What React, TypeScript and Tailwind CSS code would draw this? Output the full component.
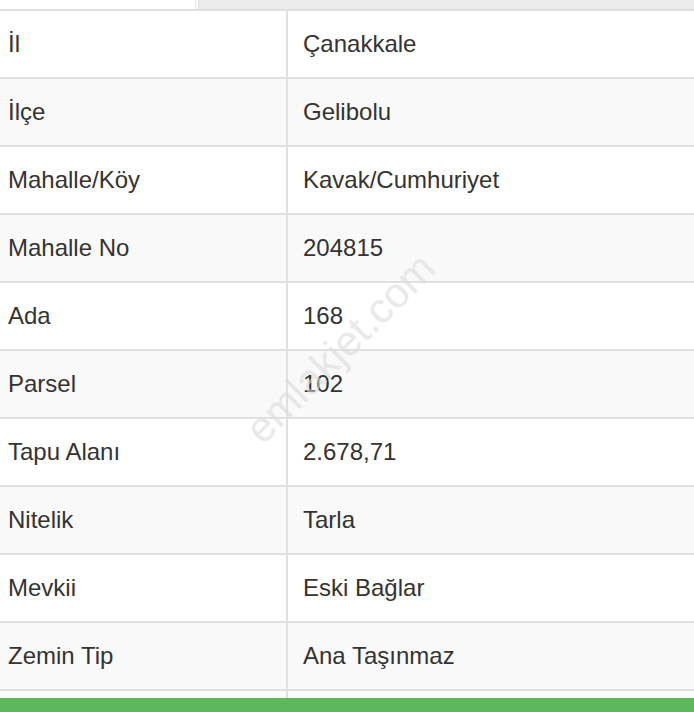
const rows: [string, string][] = [
  ['İl', 'Çanakkale'],
  ['İlçe', 'Gelibolu'],
  ['Mahalle/Köy', 'Kavak/Cumhuriyet'],
  ['Mahalle No', '204815'],
  ['Ada', '168'],
  ['Parsel', '102'],
  ['Tapu Alanı', '2.678,71'],
  ['Nitelik', 'Tarla'],
  ['Mevkii', 'Eski Bağlar'],
  ['Zemin Tip', 'Ana Taşınmaz'],
];

export default function App() {
  return (
    <div
      className="relative w-[694px] h-[712px] overflow-hidden bg-white text-[#333]"
      style={{ fontFamily: '"Liberation Sans", Arial, sans-serif' }}
    >
      {/* tabs */}
      <div className="flex h-[9px]">
        <div className="w-[196px] bg-white border-r border-[#e6e6e6]" />
        <div className="flex-1 ml-[2px] bg-[#ebebeb] border-l border-[#dcdcdc]" />
      </div>

      {/* table */}
      <div className="border-t-2 border-[#e0e0e0]">
        {rows.map(([label, value], i) => (
          <div
            key={label}
            className={`flex h-[68px] border-b-2 border-[#e0e0e0] ${i % 2 === 1 ? 'bg-[#f9f9f9]' : 'bg-white'}`}
          >
            <div className="w-[288px] flex items-center pl-[8px] text-[24px] border-r-2 border-[#e0e0e0]">
              {label}
            </div>
            <div className="flex-1 flex items-center pl-[15px] text-[24px]">{value}</div>
          </div>
        ))}
        <div className="flex h-[7px] bg-[#fbfdfb]">
          <div className="w-[288px] border-r-2 border-[#e0e0e0]" />
        </div>
      </div>

      {/* green bar */}
      <div className="h-[20px] bg-[#5cb85c]" />

      {/* watermark */}
      <div className="absolute left-[340px] top-[348px] -translate-x-1/2 -translate-y-1/2 -rotate-45 text-[42px] text-[#dcdcdc] opacity-60 whitespace-nowrap pointer-events-none">
        emlakjet.com
      </div>
    </div>
  );
}
